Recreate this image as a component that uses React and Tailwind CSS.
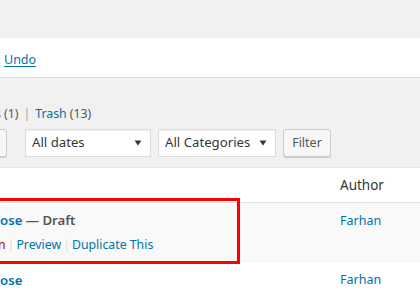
import React from "react";

const font = { fontFamily: "'Noto Sans', 'Open Sans', sans-serif" };

function Hidden({ children }) {
  return (
    <span className="inline-flex w-0 justify-end whitespace-nowrap overflow-visible">
      <span>{children}</span>
    </span>
  );
}

function Arrow() {
  return (
    <svg width="8" height="6" viewBox="0 0 8 6" className="shrink-0">
      <path d="M0.5 0.5 L7.5 0.5 L4 5.5 Z" fill="#32373c" />
    </svg>
  );
}

export default function App() {
  return (
    <div
      className="w-[420px] h-[295px] bg-[#f1f1f1] overflow-hidden relative flex flex-col"
      style={font}
    >
      <div className="h-[38px] shrink-0" />
      <div className="h-[40px] shrink-0 bg-white border-b border-[#dcdcdc] flex items-center pt-[5px] pl-[4px] text-[12.5px] text-[#444]">
        <Hidden>Post moved to the Bin.&nbsp;</Hidden>
        <a className="text-[#0073aa] underline underline-offset-[2px]">Undo</a>
      </div>
      <div className="mt-[26px] h-[20px] shrink-0 flex items-center pl-[4px] text-[12.3px] text-[#555] whitespace-nowrap leading-[20px]">
        <Hidden>Drafts&nbsp;</Hidden>
        <span>(1)</span>
        <span className="text-[#a0a5aa] mx-[5px]">|</span>
        <span className="text-[#0073aa]">Trash</span>
        <span>&nbsp;(13)</span>
      </div>
      <div className="mt-[5px] h-[28px] shrink-0 flex items-stretch text-[13.2px] text-[#32373c]">
        <div className="w-[8px] -ml-[1px] bg-[#f7f7f7] border border-[#ccc] rounded-r-[3px] shadow-[0_1px_0_#ccc]" />
        <div className="ml-[18px] w-[126px] bg-white border border-[#ddd] shadow-[inset_0_1px_2px_rgba(0,0,0,0.07)] flex items-center justify-between pl-[6px] pr-[8px]">
          <span>All dates</span>
          <Arrow />
        </div>
        <div className="ml-[7px] w-[118px] bg-white border border-[#ddd] shadow-[inset_0_1px_2px_rgba(0,0,0,0.07)] flex items-center justify-between pl-[6px] pr-[8px]">
          <span className="whitespace-nowrap">All Categories</span>
          <Arrow />
        </div>
        <div className="ml-[7px] w-[48px] bg-[#f7f7f7] border border-[#ccc] rounded-[3px] shadow-[0_1px_0_#ccc] flex items-center justify-center text-[12.5px] text-[#555]">
          Filter
        </div>
      </div>
      <div className="mt-[10px] shrink-0 border-t border-[#e5e5e5] bg-white">
        <div className="h-[35px] flex items-center border-b border-[#e1e1e1]">
          <div className="w-[340px]" />
          <div className="text-[13.5px] text-[#32373c]">Author</div>
        </div>
        <div className="h-[60px] bg-[#f9f9f9] flex">
          <div className="w-[340px] pt-[7px]">
            <div className="h-[20px] leading-[20px] text-[13.2px] font-semibold whitespace-nowrap">
              <Hidden>
                <span className="text-[#0073aa]">Purp</span>
              </Hidden>
              <span className="text-[#0073aa]">ose</span>
              <span className="text-[#555]"> — Draft</span>
            </div>
            <div className="mt-[5px] -ml-[2px] h-[20px] leading-[20px] text-[12.3px] whitespace-nowrap flex items-center">
              <Hidden>
                <span className="text-[#a00]">Bi</span>
              </Hidden>
              <span className="text-[#a00]">n</span>
              <span className="text-[#ddd] mx-[2px]">|</span>
              <span className="text-[#0073aa]">Preview</span>
              <span className="text-[#ddd] mx-[2px]">|</span>
              <span className="text-[#0073aa]">Duplicate This</span>
            </div>
          </div>
          <div className="pt-[8px] text-[12.5px] text-[#0073aa] leading-[20px]">Farhan</div>
        </div>
        <div className="h-[40px] bg-white flex">
          <div className="w-[340px] pt-[7px] h-[20px] leading-[20px] text-[13.2px] font-semibold whitespace-nowrap">
            <Hidden>
              <span className="text-[#0073aa]">Purp</span>
            </Hidden>
            <span className="text-[#0073aa]">ose</span>
          </div>
          <div className="pt-[7px] text-[12.5px] text-[#0073aa] leading-[20px]">Farhan</div>
        </div>
      </div>
      <div className="absolute left-[-10px] top-[198px] w-[250px] h-[66px] border-[3px] border-[#ff0000]" />
    </div>
  );
}
